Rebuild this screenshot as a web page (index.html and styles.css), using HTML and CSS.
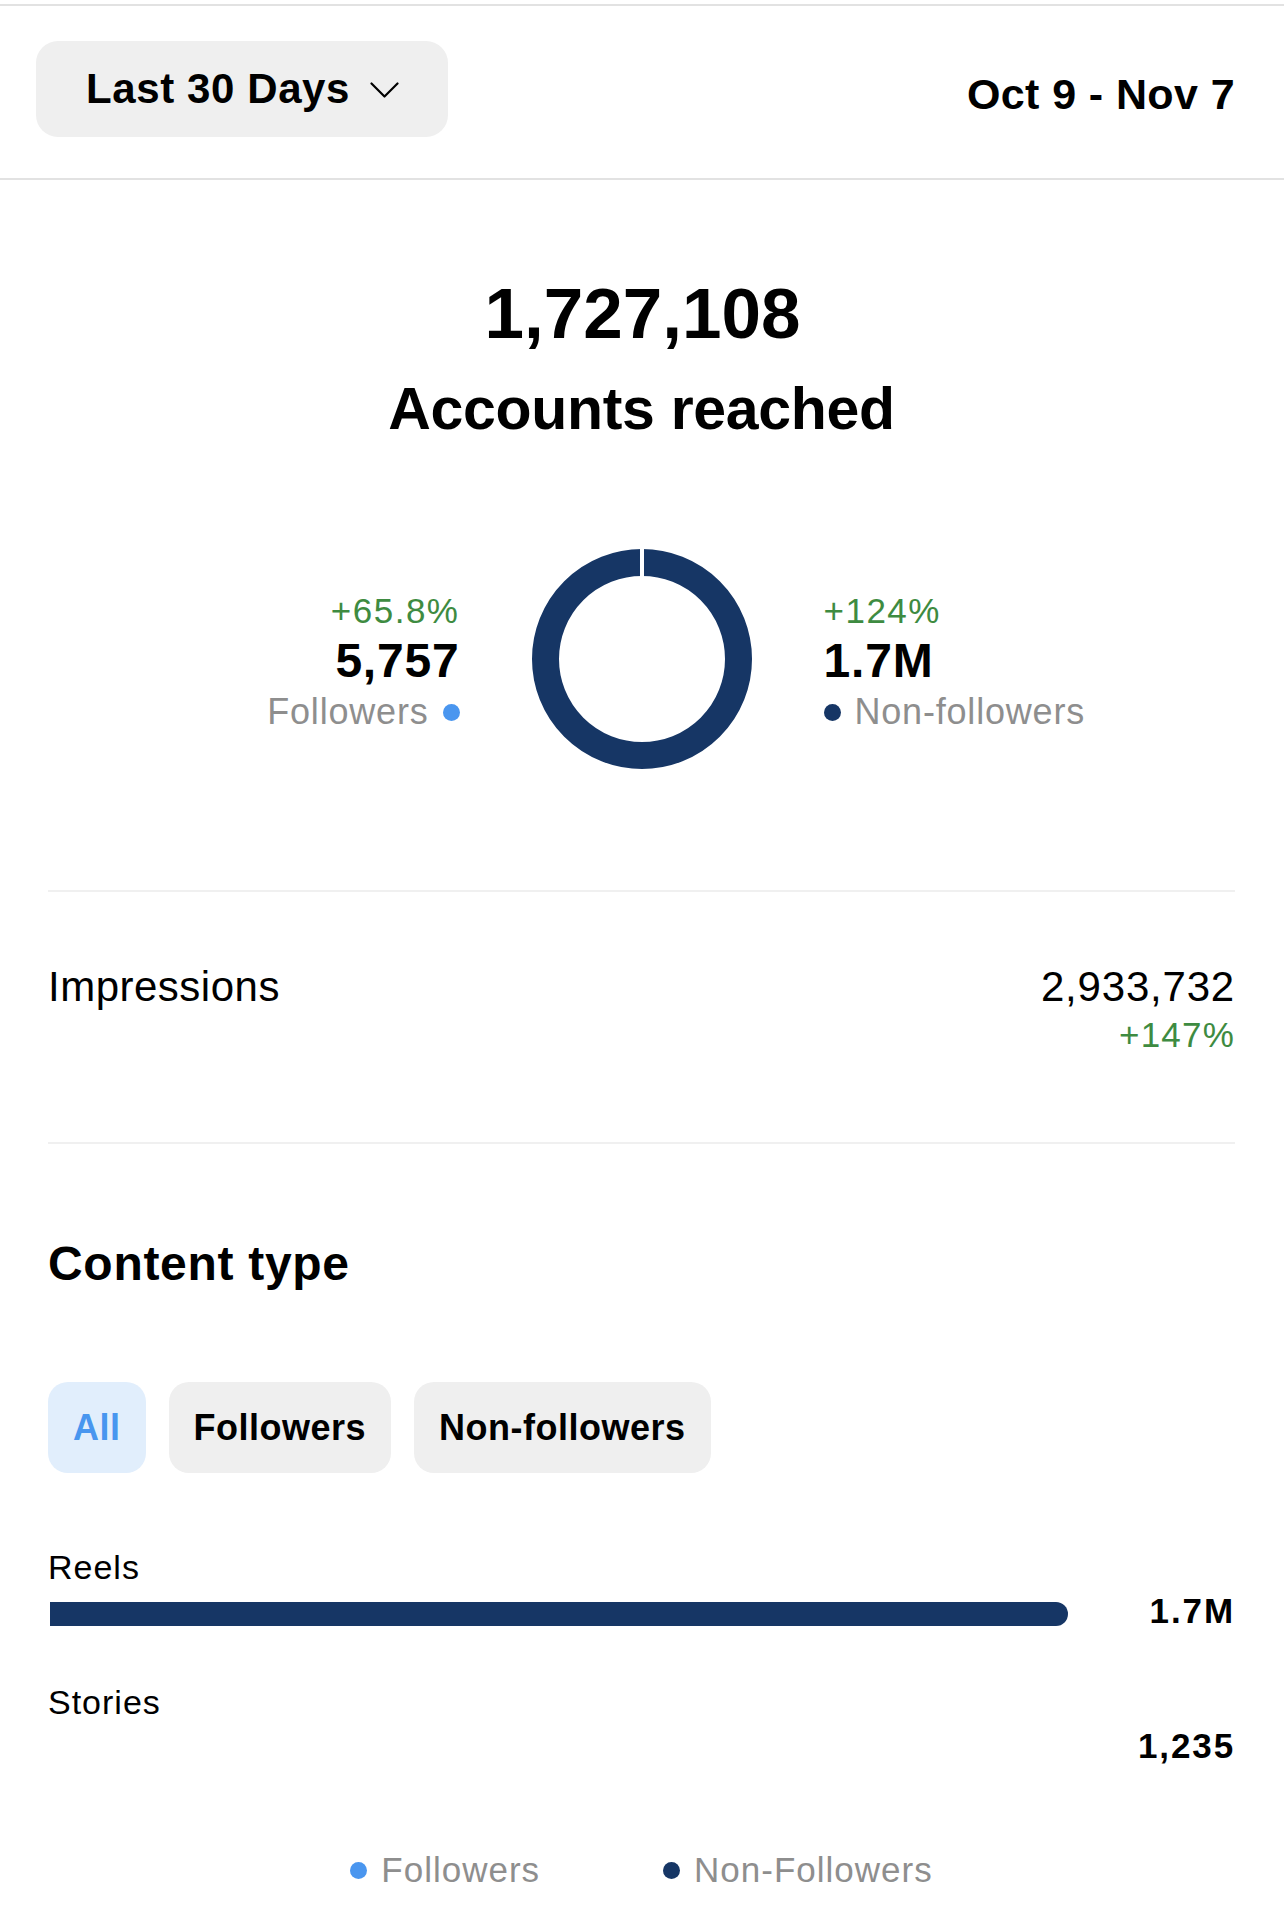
FILE: index.html
```html
<!DOCTYPE html>
<html lang="en">
<head>
<meta charset="utf-8">
<title>Insights</title>
<link rel="stylesheet" href="styles.css">
</head>
<body>
<header class="header">
  <button class="range-btn">
    <span>Last 30 Days</span>
    <svg class="chev" width="29" height="16" viewBox="0 0 29 16"><polyline points="1.5,1.5 14.5,14.5 27.5,1.5" fill="none" stroke="#000" stroke-width="2.2" stroke-linecap="round" stroke-linejoin="round"/></svg>
  </button>
  <div class="date-range">Oct 9 - Nov 7</div>
</header>

<main class="content">
  <section class="hero">
    <div class="hero-num">1,727,108</div>
    <div class="hero-label">Accounts reached</div>
  </section>

  <section class="split">
    <div class="stat stat-left">
      <div class="pct">+65.8%</div>
      <div class="stat-num">5,757</div>
      <div class="stat-label">Followers <span class="dot dot-light"></span></div>
    </div>
    <svg class="donut" width="220" height="220" viewBox="0 0 220 220">
      <circle cx="110" cy="110" r="96.5" fill="none" stroke="#163665" stroke-width="27"/>
      <rect x="108" y="0" width="4" height="30" fill="#fff"/>
    </svg>
    <div class="stat stat-right">
      <div class="pct">+124%</div>
      <div class="stat-num">1.7M</div>
      <div class="stat-label"><span class="dot dot-dark"></span> Non-followers</div>
    </div>
  </section>

  <hr class="divider divider-1">

  <section class="impressions">
    <div class="imp-label">Impressions</div>
    <div class="imp-values">
      <div class="imp-num">2,933,732</div>
      <div class="imp-pct">+147%</div>
    </div>
  </section>

  <hr class="divider divider-2">

  <h2 class="section-title">Content type</h2>

  <div class="pills">
    <div class="pill pill-active">All</div>
    <div class="pill">Followers</div>
    <div class="pill">Non-followers</div>
  </div>

  <div class="ct-item ct-first">
    <div class="ct-label">Reels</div>
    <div class="ct-row">
      <div class="ct-track"><div class="ct-fill" style="width: 100%"></div></div>
      <div class="ct-value">1.7M</div>
    </div>
  </div>

  <div class="ct-item">
    <div class="ct-label">Stories</div>
    <div class="ct-row">
      <div class="ct-track"><div class="ct-fill" style="width: 0%"></div></div>
      <div class="ct-value">1,235</div>
    </div>
  </div>

  <div class="legend">
    <div class="legend-item"><span class="dot dot-light"></span>Followers</div>
    <div class="legend-item"><span class="dot dot-dark"></span>Non-Followers</div>
  </div>
</main>
</body>
</html>
```

FILE: styles.css
```css
* { box-sizing: border-box; }

html, body {
  margin: 0;
  padding: 0;
  background: #fff;
}

body {
  width: 1284px;
  min-height: 1926px;
  font-family: "Liberation Sans", Arial, Helvetica, sans-serif;
  color: #000;
}

.header {
  margin-top: 4px;
  border-top: 2px solid #e2e2e2;
  border-bottom: 2px solid #e2e2e2;
  padding: 35px 49px 41px 36px;
  display: flex;
  align-items: center;
  justify-content: space-between;
}

.range-btn {
  height: 96px;
  width: 412px;
  border: none;
  border-radius: 22px;
  background: #efefef;
  padding: 0 0 0 50px;
  display: flex;
  align-items: center;
  gap: 20px;
  font-family: inherit;
  font-size: 42px;
  font-weight: 700;
  letter-spacing: 0.6px;
  color: #000;
  cursor: pointer;
}

.chev { display: block; margin-top: 2px; }

.date-range {
  font-size: 43px;
  font-weight: 700;
  line-height: 50px;
  letter-spacing: 0.4px;
  margin-top: 10px;
}

.content {
  padding: 0 49px 0 48px;
}

.hero { text-align: center; }

.hero-num {
  margin-top: 94px;
  font-size: 71px;
  font-weight: 700;
  line-height: 80px;
  padding-left: 2px;
}

.hero-label {
  margin-top: 20px;
  font-size: 59px;
  font-weight: 700;
  line-height: 70px;
  letter-spacing: -0.3px;
}

.split {
  margin-top: 105px;
  display: grid;
  grid-template-columns: 1fr 220px 1fr;
  column-gap: 72px;
  align-items: center;
}

.donut { display: block; }

.stat { margin-top: 6px; }
.stat-left { justify-self: end; text-align: right; }
.stat-right { justify-self: start; text-align: left; }

.pct {
  color: #3e8b41;
  font-size: 35px;
  line-height: 36px;
  letter-spacing: 1.5px;
}

.stat-num {
  margin-top: 7px;
  font-size: 48px;
  font-weight: 700;
  line-height: 50px;
  letter-spacing: 0.8px;
}

.stat-label {
  margin-top: 7px;
  font-size: 36px;
  line-height: 38px;
  color: #8e8e8e;
  letter-spacing: 0.8px;
  display: flex;
  align-items: center;
  gap: 14px;
}

.stat-left .stat-label { justify-content: flex-end; }

.dot {
  display: inline-block;
  width: 17px;
  height: 17px;
  border-radius: 50%;
  flex: none;
}
.dot-light { background: #4a96ef; }
.dot-dark { background: #163665; }

.divider {
  border: none;
  height: 2px;
  background: #f0f0f0;
  margin: 0;
}
.divider-1 { margin-top: 121px; }
.divider-2 { margin-top: 87px; }

.impressions {
  margin-top: 71px;
  display: flex;
  justify-content: space-between;
  align-items: flex-start;
}

.imp-label {
  font-size: 42px;
  line-height: 48px;
  letter-spacing: 0.5px;
}

.imp-values { text-align: right; }

.imp-num {
  font-size: 42px;
  line-height: 48px;
  letter-spacing: 0.8px;
}

.imp-pct {
  margin-top: 4px;
  font-size: 35px;
  line-height: 40px;
  letter-spacing: 1.2px;
  color: #3e8b41;
}

.section-title {
  margin: 93px 0 0;
  font-size: 48px;
  font-weight: 700;
  line-height: 54px;
  letter-spacing: 0.7px;
}

.pills {
  margin-top: 91px;
  display: flex;
  gap: 23px;
}

.pill {
  height: 91px;
  padding: 0 25px;
  border-radius: 20px;
  background: #efefef;
  display: flex;
  align-items: center;
  font-size: 36px;
  font-weight: 700;
  letter-spacing: 0.5px;
}

.pill-active {
  background: #e1eefc;
  color: #4896ef;
}

.ct-first { margin-top: 74px; }
.ct-item + .ct-item { margin-top: 48px; }

.ct-label {
  font-size: 34px;
  line-height: 40px;
  letter-spacing: 1px;
}

.ct-row {
  margin-top: 7px;
  height: 40px;
  display: flex;
  align-items: center;
}

.ct-track {
  flex: 1;
  height: 24px;
  margin-left: 2px;
}

.ct-fill {
  height: 100%;
  background: #163665;
  border-radius: 0 12px 12px 0;
}

.ct-value {
  width: 167px;
  text-align: right;
  font-size: 35px;
  font-weight: 700;
  line-height: 40px;
  letter-spacing: 1.9px;
  margin-bottom: 6px;
}

.legend {
  margin-top: 80px;
  display: flex;
  justify-content: center;
  gap: 123px;
  font-size: 35px;
  line-height: 42px;
  color: #8e8e8e;
  letter-spacing: 1px;
}

.legend-item {
  display: flex;
  align-items: center;
  gap: 14px;
}
```
